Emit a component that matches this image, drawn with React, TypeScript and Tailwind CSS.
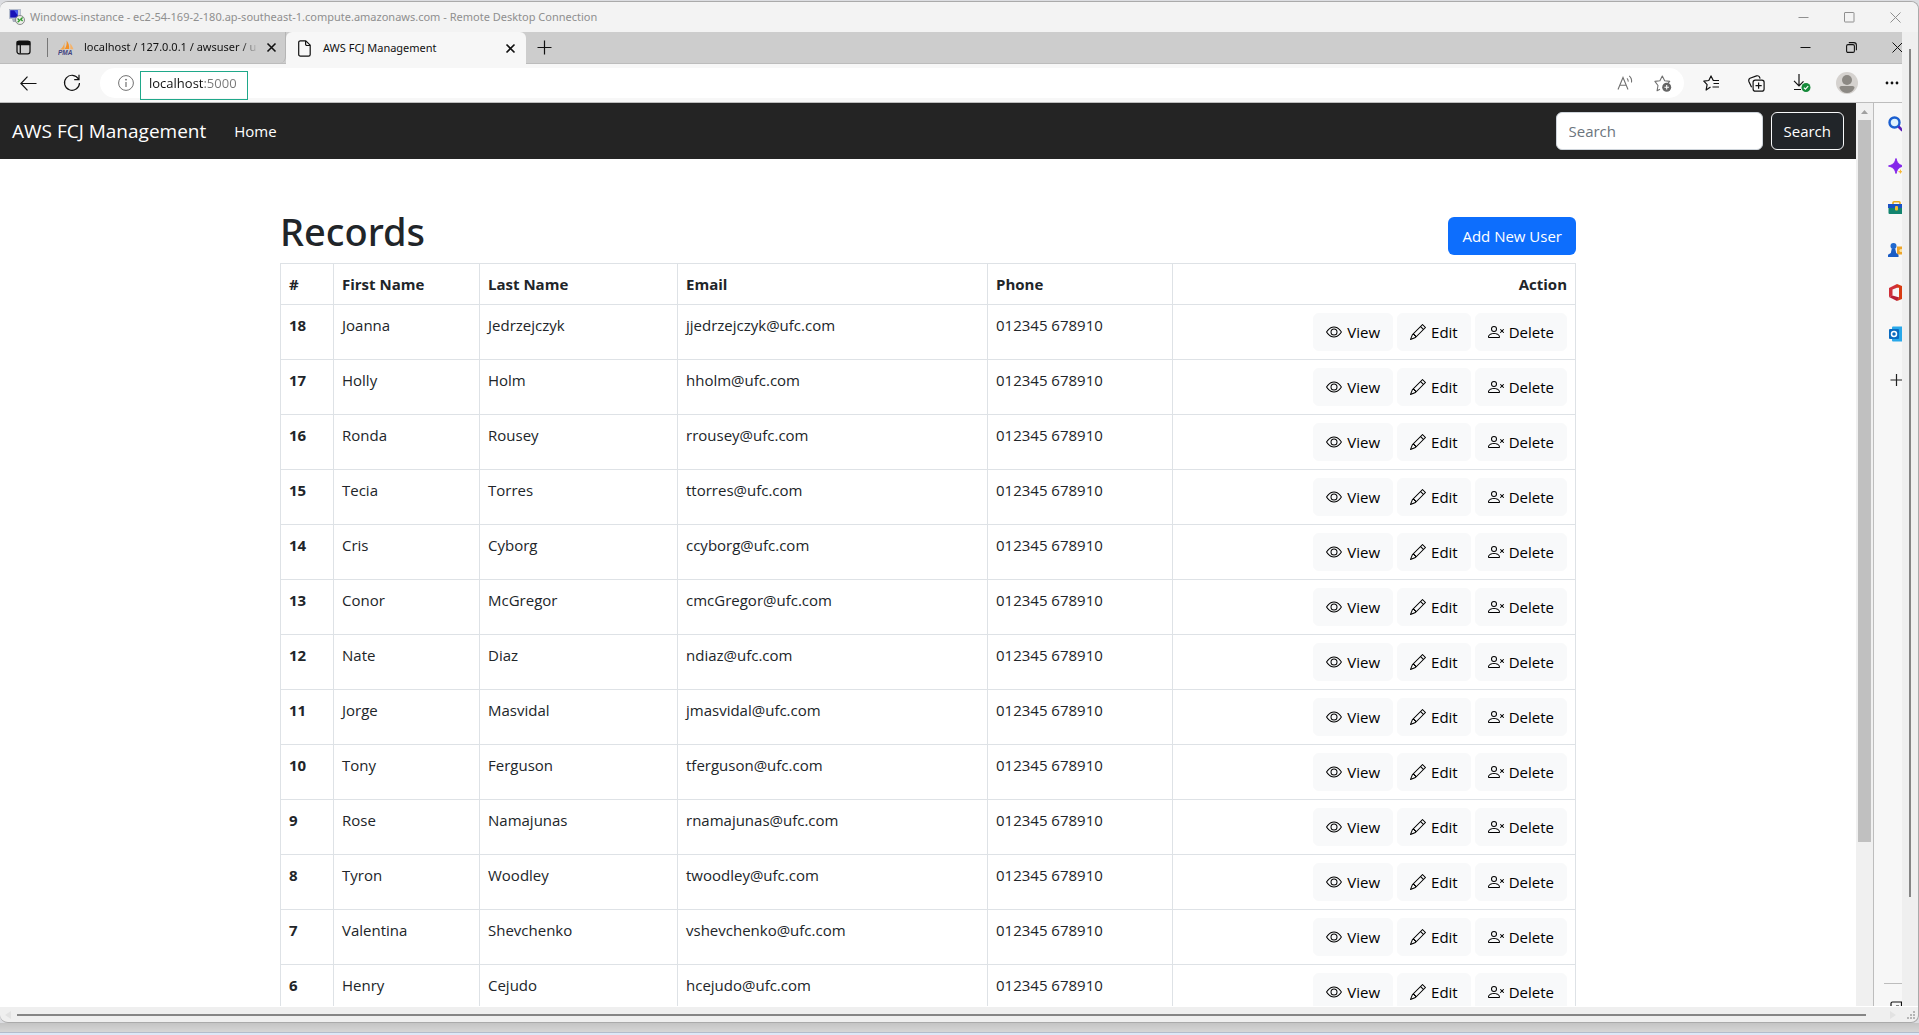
import React from 'react';
import { BsEye, BsPencil } from 'react-icons/bs';

const records = [
  { id: 18, first: 'Joanna', last: 'Jedrzejczyk', email: 'jjedrzejczyk@ufc.com' },
  { id: 17, first: 'Holly', last: 'Holm', email: 'hholm@ufc.com' },
  { id: 16, first: 'Ronda', last: 'Rousey', email: 'rrousey@ufc.com' },
  { id: 15, first: 'Tecia', last: 'Torres', email: 'ttorres@ufc.com' },
  { id: 14, first: 'Cris', last: 'Cyborg', email: 'ccyborg@ufc.com' },
  { id: 13, first: 'Conor', last: 'McGregor', email: 'cmcGregor@ufc.com' },
  { id: 12, first: 'Nate', last: 'Diaz', email: 'ndiaz@ufc.com' },
  { id: 11, first: 'Jorge', last: 'Masvidal', email: 'jmasvidal@ufc.com' },
  { id: 10, first: 'Tony', last: 'Ferguson', email: 'tferguson@ufc.com' },
  { id: 9, first: 'Rose', last: 'Namajunas', email: 'rnamajunas@ufc.com' },
  { id: 8, first: 'Tyron', last: 'Woodley', email: 'twoodley@ufc.com' },
  { id: 7, first: 'Valentina', last: 'Shevchenko', email: 'vshevchenko@ufc.com' },
  { id: 6, first: 'Henry', last: 'Cejudo', email: 'hcejudo@ufc.com' },
];

const MinimizeIcon = () => <svg width="11" height="11" viewBox="0 0 11 11" stroke="currentColor"><path d="M0.5 5.5h10" /></svg>;
const MaximizeIcon = () => <svg width="11" height="11" viewBox="0 0 11 11" fill="none" stroke="currentColor"><rect x="0.5" y="0.5" width="9.5" height="9.5" rx="0.5" /></svg>;
const RestoreIcon = () => <svg width="11" height="11" viewBox="0 0 11 11" fill="none" stroke="currentColor" strokeWidth="1.1"><rect x="0.6" y="2.6" width="7.8" height="7.8" rx="1.4" /><path d="M2.8 0.6h5a2.6 2.6 0 0 1 2.6 2.6v5" /></svg>;
const CloseIcon = ({ bold = false }: { bold?: boolean }) => <svg className="shrink-0" width="11" height="11" viewBox="0 0 11 11" stroke="currentColor" strokeWidth={bold ? 1.6 : 1}><path d={bold ? 'M1.5 1.5l8 8M9.5 1.5l-8 8' : 'M0.5 0.5l10 10M10.5 0.5l-10 10'} /></svg>;

const RemoteDesktopIcon = () => <svg width="16" height="16" viewBox="0 0 16 16">
  <rect x="0.5" y="0.5" width="11" height="9" fill="#c8cede" stroke="#9aa3ba" strokeWidth="0.6" />
  <rect x="1.2" y="1.2" width="7.6" height="7.4" fill="#1713b8" />
  <path d="M5 1.2h3.8v5.4z" fill="#4a62ee" />
  <path d="M3 10h5l-1 3H4z" fill="#a9afbd" />
  <circle cx="11" cy="11" r="4.5" fill="#eeeeea" stroke="#7c7f80" strokeWidth="0.9" />
  <path d="M8.6 9.6l2 1.8-2 1.8M13.6 8.6l-1.9 1.7 1.9 1.7" fill="none" stroke="#2e9a2c" strokeWidth="1.3" />
</svg>;

const TabActionsIcon = () => <svg width="15" height="15" viewBox="0 0 15 15" fill="none" stroke="#111" strokeWidth="1.3">
  <rect x="1" y="1.2" width="13" height="12.6" rx="2.2" />
  <path d="M1.4 1.6h12.2v3H1.4z" fill="#111" />
  <path d="M4.3 4v9.6" />
</svg>;

const PmaIcon = () => <svg className="shrink-0" width="17" height="16" viewBox="0 0 17 16">
  <path d="M6.4 2C6 5.5 4.4 8 2 9.4h4.6z" fill="#f3a64c" />
  <path d="M8.6 0.5c2 2.6 2.8 5.4 2.6 8.6H6.8c1.6-2.6 2.2-5.4 1.8-8.6z" fill="#f49025" />
  <path d="M12.2 3.5c1.4 1.6 2.6 3.6 3.2 5.8h-3z" fill="#f7b267" />
  <text x="0" y="15" fontFamily="Liberation Sans, sans-serif" fontSize="6.5" fontWeight="700" fontStyle="italic" fill="#40427f">PMA</text>
</svg>;

const PageIcon = () => <svg width="13" height="17" viewBox="0 0 13 17" fill="none" stroke="#111" strokeWidth="1.2" strokeLinejoin="round">
  <path d="M2.4 0.8h5.4l4.4 4.4v9.2a1.7 1.7 0 0 1-1.7 1.7H2.4a1.7 1.7 0 0 1-1.7-1.7V2.5a1.7 1.7 0 0 1 1.7-1.7z" />
  <path d="M7.6 1v3.2a1.3 1.3 0 0 0 1.3 1.3H12" />
</svg>;

const BackIcon = () => <svg width="17" height="15" viewBox="0 0 17 15" fill="none" stroke="#111" strokeWidth="1.2"><path d="M7.5 0.7L0.9 7.5l6.6 6.8M1 7.5h15.5" /></svg>;
const RefreshIcon = () => <svg width="18" height="18" viewBox="0 0 18 18" fill="none" stroke="#111" strokeWidth="1.2"><path d="M15.5 5A7.5 7.5 0 1 0 16.5 9M16 0.8V5.6H11.2" /></svg>;
const InfoIcon = () => <svg width="16" height="16" viewBox="0 0 16 16" fill="none" stroke="#717171"><circle cx="8" cy="8" r="7.4" /><path d="M8 7v5" strokeWidth="1.2" /><circle cx="8" cy="4.7" r="0.5" fill="#717171" /></svg>;

const ReadAloudIcon = () => <svg width="17" height="16" viewBox="0 0 17 16" fill="none" stroke="#717171" strokeWidth="1.1">
  <path d="M1 14.5L6 2.5l5 12M2.8 10.3h6.4" />
  <path d="M10 3.3c1 0.9 1.3 2 1.2 3.3M12.2 0.9c2 1.7 2.7 4 2.3 6.6" />
</svg>;

const AddFavoriteIcon = () => <svg width="18" height="17" viewBox="0 0 18 17" fill="none">
  <path d="M6 14.2l-2.9 1.5 0.9-5.2L0.9 6.4l5-0.7L8.3 1l2.4 4.7 5 0.7-1.6 1.7" stroke="#717171" strokeWidth="1.1" strokeLinejoin="round" />
  <circle cx="12.7" cy="12.3" r="4.5" fill="#666" />
  <path d="M12.7 10v4.6M10.4 12.3H15" stroke="#fff" strokeWidth="1.1" />
</svg>;

const FavoritesIcon = () => <svg width="17" height="16" viewBox="0 0 17 16" fill="none" stroke="#111" strokeWidth="1.2" strokeLinejoin="round">
  <path d="M7.5 12l-4.400 3 1-5.400L0.800 6.200l5-0.700L8 0.900l2.300 4.600H16M10.500 8.500H16M9.500 12H16" />
</svg>;

const CollectionsIcon = () => <svg width="17" height="17" viewBox="0 0 17 17" fill="none" stroke="#111" strokeWidth="1.2">
  <rect x="5.1" y="5.1" width="11" height="11" rx="2.2" />
  <path d="M10.6 7.5v6.2M7.5 10.6h6.2" />
  <path d="M3.6 12.3L1 6.7C0.5 5.2 0.6 4 2 3.2l6.5-2.3c1.4-0.4 2.5 0 3 1.2l0.6 1.5" />
</svg>;

const DownloadsIcon = () => <svg width="18" height="20" viewBox="0 0 18 20" fill="none" stroke="#111" strokeWidth="1.2">
  <path d="M6 1v11.5M1 7.8l5 5 4.5-4.5M1 16.5h7" />
  <circle cx="13" cy="14.5" r="4.5" fill="#168a3a" stroke="none" />
  <path d="M10.9 14.6l1.5 1.5 2.8-2.9" stroke="#fff" />
</svg>;

const AvatarIcon = () => <svg width="22" height="22" viewBox="0 0 22 22">
  <circle cx="11" cy="11" r="11" fill="#d5d2cf" />
  <circle cx="11" cy="8" r="5" fill="#8c8984" />
  <path d="M3.5 16c0-1.2 0.8-1.9 2-1.9h11c1.2 0 2 0.7 2 1.9-1.5 3.4-4.2 5-7.5 5s-6-1.6-7.5-5z" fill="#8c8984" />
</svg>;

const PersonXIcon = () => <svg width="16" height="16" viewBox="0 0 16 16" fill="currentColor">
  <path d="M8 5a2 2 0 1 1-4 0 2 2 0 0 1 4 0zM6 8a3 3 0 1 0 0-6 3 3 0 0 0 0 6zm6 5c0 1-1 1-1 1H1s-1 0-1-1 1-4 6-4 6 3 6 4zm-1-.004c-.001-.246-.154-.986-.832-1.664C9.516 10.68 8.289 10 6 10c-2.29 0-3.516.68-4.168 1.332-.678.678-.83 1.418-.832 1.664h10z" />
  <path d="M12.146 5.146a.5.5 0 0 1 .708 0L14 6.293l1.146-1.147a.5.5 0 0 1 .708.708L14.707 7l1.147 1.146a.5.5 0 0 1-.708.708L14 7.707l-1.146 1.147a.5.5 0 0 1-.708-.708L13.293 7l-1.147-1.146a.5.5 0 0 1 0-.708z" />
</svg>;

const sidebarItems = [
  { name: 'Search', icon: <><circle cx="6.5" cy="6.5" r="5" fill="#dff3fd" stroke="#1b5fd0" strokeWidth="2.4" /><path d="M10.5 10.5l4 4" stroke="#5a1fb8" strokeWidth="2.6" /></> },
  { name: 'Discover', icon: <><path d="M8 0.5c1.2 4.5 3 6.3 7.5 7.5-4.5 1.2-6.3 3-7.5 7.5C6.8 11 5 9.2 0.5 8c4.5-1.2 6.3-3 7.5-7.5z" fill="#8427ea" stroke="#8427ea" /><path d="M12.5 11l0.7 2 2 0.7-2 0.7-0.7 1.6-0.7-1.6-2-0.7 2-0.7z" fill="#f7b733" /></> },
  { name: 'Shopping', icon: <><path d="M5 4V2.8C5 2.2 5.4 1.8 6 1.8h5c0.6 0 1 0.4 1 1V4" fill="none" stroke="#e8a91c" strokeWidth="1.6" /><rect x="0.5" y="4" width="16" height="10" rx="1" fill="#12846f" /><path d="M0 4h17v4H0z" fill="#1a52c4" /><rect x="7" y="6" width="3" height="4.5" rx="1" fill="#f4bd2f" /></> },
  { name: 'Games', icon: <><path d="M9 4.5h8v8H9z" fill="#eda52c" /><circle cx="13" cy="8.5" r="1.6" fill="#fbe3a2" /><circle cx="5.5" cy="4" r="3" fill="#2069cf" /><path d="M3.8 6.5h3.4l1 4.5 2.3 1.8V15H0v-2.2L2.8 11z" fill="#1a5cc4" /></> },
  { name: 'Office', icon: <><path d="M9 0L1 4v9l3.5-1.5V5.5L9 3.8z" fill="#d0303a" /><path d="M9 0l6 2.3v12.4L9 17l2-3.5V3.8H9z" fill="#d83b12" /><path d="M1 13l8 4 2.3-3.5L4.5 11.5z" fill="#b81d32" /></> },
  { name: 'Outlook', icon: <><rect x="4" y="0.5" width="13" height="15" rx="1" fill="#28a8ea" /><rect x="1" y="3" width="10" height="10" rx="1" fill="#0a6bc0" /><circle cx="6" cy="8" r="2.5" fill="none" stroke="#fff" strokeWidth="1.5" /></> },
  { name: 'Customize', icon: <path d="M8.5 6v12M2.5 12h12" stroke="#222" strokeWidth="1.2" /> },
];

const actionClass = 'flex items-center gap-[5px] rounded-md border border-[#f8f9fa] bg-[#f8f9fa] px-3 py-1.5 text-black hover:bg-gray-200';
const cellClass = 'border border-[#dee2e6] p-2';

const RecordsPage: React.FC = () => <div className="flex-1 min-w-0 overflow-hidden bg-white text-[15px] leading-6 text-[#212529]">
  {/* Navbar */}
  <nav className="flex items-center bg-[#242424] px-3 py-2 h-14 text-white">
    <a href="#" className="text-[19px] leading-8">AWS FCJ Management</a>
    <a href="#" className="ml-7">Home</a>
    <form className="ml-auto flex gap-2">
      <input type="search" aria-label="Search" placeholder="Search" className="w-[207px] h-[38px] rounded-md border border-[#ced4da] bg-white px-3 text-[#212529] placeholder-[#6c757d]" />
      <button type="button" className="h-[38px] rounded-md border border-[#f8f9fa] bg-[#212529] px-3">Search</button>
    </form>
  </nav>
  {/* Records */}
  <main className="mx-auto max-w-[1320px] px-3 pt-12">
    <div className="mb-2 flex h-12 items-end justify-between">
      <h1 className="font-['Noto_Sans','Open_Sans',sans-serif] text-[38px] leading-[48px] font-medium">Records</h1>
      <button type="button" className="h-[38px] rounded-md bg-[#0d6efd] px-3.5 text-white">Add New User</button>
    </div>
    <table className="w-full table-fixed border-collapse text-left">
      <thead>
        <tr>
          <th className={`${cellClass} w-[53px]`}>#</th>
          <th className={`${cellClass} w-[146px]`}>First Name</th>
          <th className={`${cellClass} w-[198px]`}>Last Name</th>
          <th className={`${cellClass} w-[310px]`}>Email</th>
          <th className={`${cellClass} w-[185px]`}>Phone</th>
          <th className={`${cellClass} text-right`}>Action</th>
        </tr>
      </thead>
      <tbody>
        {records.map((record) => <tr key={record.id} className="align-top">
          <th className={cellClass}>{record.id}</th>
          <td className={cellClass}>{record.first}</td>
          <td className={cellClass}>{record.last}</td>
          <td className={cellClass}>{record.email}</td>
          <td className={cellClass}>012345 678910</td>
          <td className={cellClass}>
            <div className="flex justify-end gap-1">
              <a href="#" className={actionClass}><BsEye size={16} />View</a>
              <a href="#" className={actionClass}><BsPencil size={16} />Edit</a>
              <a href="#" className={actionClass}><PersonXIcon />Delete</a>
            </div>
          </td>
        </tr>)}
      </tbody>
    </table>
  </main>
</div>;

const TabStrip: React.FC = () => <div className="flex h-8 shrink-0 border-b border-[#bcbcbc] bg-[#cdcdcd] text-[11px] text-[#111]">
  <button type="button" aria-label="Tab actions menu" className="flex w-[47px] items-center pl-4"><TabActionsIcon /></button>
  <div className="my-1.5 w-px bg-[#777]" />
  <div className="flex w-[238px] items-center rounded-br-md border-r border-[#b5b5b5] pl-[10px] pr-[8px]">
    <PmaIcon />
    <span className="ml-[9px] min-w-0 flex-1 overflow-hidden whitespace-nowrap mask-r-from-90%">localhost / 127.0.0.1 / awsuser / u</span>
    <button type="button" aria-label="Close tab" className="ml-2"><CloseIcon bold /></button>
  </div>
  <div className="-mb-px flex w-[240px] items-center rounded-t-md bg-[#f7f7f7] pl-3 pr-[10px]">
    <PageIcon />
    <span className="ml-3 flex-1">AWS FCJ Management</span>
    <button type="button" aria-label="Close tab"><CloseIcon bold /></button>
  </div>
  <button type="button" aria-label="New tab" className="flex w-9 items-center justify-center">
    <svg width="15" height="15" viewBox="0 0 15 15" stroke="#111" strokeWidth="1.2"><path d="M7.5 0.5v14M0.5 7.5h14" /></svg>
  </button>
  <div className="ml-auto flex">
    <button type="button" aria-label="Minimize" className="flex w-[46px] items-center justify-center"><MinimizeIcon /></button>
    <button type="button" aria-label="Restore" className="flex w-[46px] items-center justify-center"><RestoreIcon /></button>
    <button type="button" aria-label="Close" className="flex w-7 items-center overflow-hidden pl-[18px]"><CloseIcon /></button>
  </div>
</div>;

const Toolbar: React.FC = () => <div className="flex h-[39px] shrink-0 items-center border-b border-[#bdbdbd] bg-[#f7f7f7] pl-[6px]">
  <button type="button" aria-label="Back" className="flex w-11 justify-center"><BackIcon /></button>
  <button type="button" aria-label="Refresh" className="flex w-11 justify-center"><RefreshIcon /></button>
  <div className="relative ml-[6px] mr-[5px] flex h-[30px] flex-1 items-center rounded-full bg-white pl-[18px] pr-3">
    <InfoIcon />
    <input type="text" aria-label="Address" defaultValue="localhost:5000" className="ml-[15px] min-w-0 flex-1 bg-linear-to-r from-[#111] from-[55px] to-[#777] to-[55px] bg-clip-text pt-px font-['Open_Sans',sans-serif] text-[13px] text-transparent" />
    <button type="button" aria-label="Read aloud" className="mr-5"><ReadAloudIcon /></button>
    <button type="button" aria-label="Add to favorites"><AddFavoriteIcon /></button>
    {/* Callout around the address */}
    <div className="pointer-events-none absolute left-10 top-[3px] h-[29px] w-[108px] border border-[#1fa88a]" />
  </div>
  <button type="button" aria-label="Favorites" className="flex w-[45px] justify-center"><FavoritesIcon /></button>
  <button type="button" aria-label="Collections" className="flex w-[45px] justify-center"><CollectionsIcon /></button>
  <button type="button" aria-label="Downloads" className="flex w-[45px] justify-center"><DownloadsIcon /></button>
  <button type="button" aria-label="Profile" className="flex w-[45px] justify-center"><AvatarIcon /></button>
  <button type="button" aria-label="Settings and more" className="flex w-[33px] pl-4">
    <svg width="14" height="4" viewBox="0 0 14 4" fill="#111"><circle cx="2" cy="2" r="1.4" /><circle cx="7" cy="2" r="1.4" /><circle cx="12" cy="2" r="1.4" /></svg>
  </button>
</div>;

const Sidebar: React.FC = () => <aside className="flex w-7 shrink-0 flex-col overflow-hidden bg-[#f7f7f7] pl-[14px] pt-[13px]">
  <div className="flex flex-col gap-[25px]">
    {sidebarItems.map((item) => <button key={item.name} type="button" aria-label={item.name} className="w-[17px]">
      <svg width="17" height="17" viewBox="0 0 17 17" fill="none" overflow="visible">{item.icon}</svg>
    </button>)}
  </div>
  <div className="mt-auto -ml-1 h-[23px] border-t border-[#bdbdbd] pt-[17px]">
    <button type="button" aria-label="Sidebar settings" className="block pl-[6px]">
      <svg width="17" height="17" viewBox="0 0 17 17" fill="none" stroke="#111" strokeWidth="1.2"><rect x="1" y="1" width="14" height="14" rx="1.5" /><path d="M11.5 1v14M6 5h3" /></svg>
    </button>
  </div>
</aside>;

const App: React.FC = () => <div className="flex h-screen flex-col overflow-hidden bg-[#dcdde1] pt-px font-['Open_Sans','Noto_Sans',sans-serif]">
  {/* Remote desktop window */}
  <div className="flex min-h-0 flex-1 flex-col overflow-hidden rounded-lg border-t border-r border-b border-[#aaa] bg-[#efefef]">
    <div className="flex h-[30px] shrink-0 items-center bg-[#f3f3f3] pl-[9px] font-['Noto_Sans',sans-serif] text-[11px] text-[#8f8f8f]">
      <RemoteDesktopIcon />
      <span className="ml-[5px]">Windows-instance - ec2-54-169-2-180.ap-southeast-1.compute.amazonaws.com - Remote Desktop Connection</span>
      <div className="ml-auto flex h-full">
        <button type="button" aria-label="Minimize" className="flex w-[46px] items-center justify-center"><MinimizeIcon /></button>
        <button type="button" aria-label="Maximize" className="flex w-[46px] items-center justify-center"><MaximizeIcon /></button>
        <button type="button" aria-label="Close" className="flex w-[46px] items-center justify-center"><CloseIcon /></button>
      </div>
    </div>
    <div className="flex min-h-0 flex-1">
      {/* Browser */}
      <div className="flex min-w-0 flex-1 flex-col">
        <div className="font-['Noto_Sans',sans-serif]">
          <TabStrip />
          <Toolbar />
        </div>
        <div className="flex min-h-0 flex-1">
          <RecordsPage />
          <div className="flex w-[18px] shrink-0 flex-col border-r border-[#bdbdbd] bg-[#f0f0f0] px-[2px]">
            <div className="flex h-[17px] items-center justify-center">
              <svg width="7" height="4" viewBox="0 0 7 4" fill="#a0a0a0"><path d="M0 4L3.5 0 7 4z" /></svg>
            </div>
            <div className="min-h-0 flex-1">
              <div className="h-22/27 w-[13px] bg-[#c0c0c0]" />
            </div>
          </div>
          <Sidebar />
        </div>
      </div>
      <div className="w-4 shrink-0 pb-[109px] pl-[7px] pt-[17px]">
        <div className="h-full w-[2px] bg-[#858585]" />
      </div>
    </div>
    <div className="flex h-4 shrink-0 items-center border-t border-white pl-[5px] pr-[3px]">
      <svg width="6" height="8" viewBox="0 0 6 8" fill="#e2e2e2"><path d="M6 0v8L0 4z" /></svg>
      <div className="ml-[6px] h-[2px] flex-1 bg-[#858585]" />
      <svg className="ml-6" width="6" height="8" viewBox="0 0 6 8" fill="#e2e2e2"><path d="M0 0v8l6-4z" /></svg>
      <svg className="ml-[11px]" width="8" height="8" viewBox="0 0 8 8" fill="#b5b5b5"><path d="M6 0h2v2H6zM3 3h2v2H3zM6 3h2v2H6zM0 6h2v2H0zM3 6h2v2H3zM6 6h2v2H6z" /></svg>
    </div>
  </div>
  {/* Desktop edge under the window */}
  <div className="h-[9px] shrink-0 bg-linear-to-b from-[#c4c4c4] to-[#d6d6d6]" />
  <div className="h-[3px] shrink-0 border-t border-[#b3bccb] bg-[#dde8f7]" />
</div>;

export default App;
